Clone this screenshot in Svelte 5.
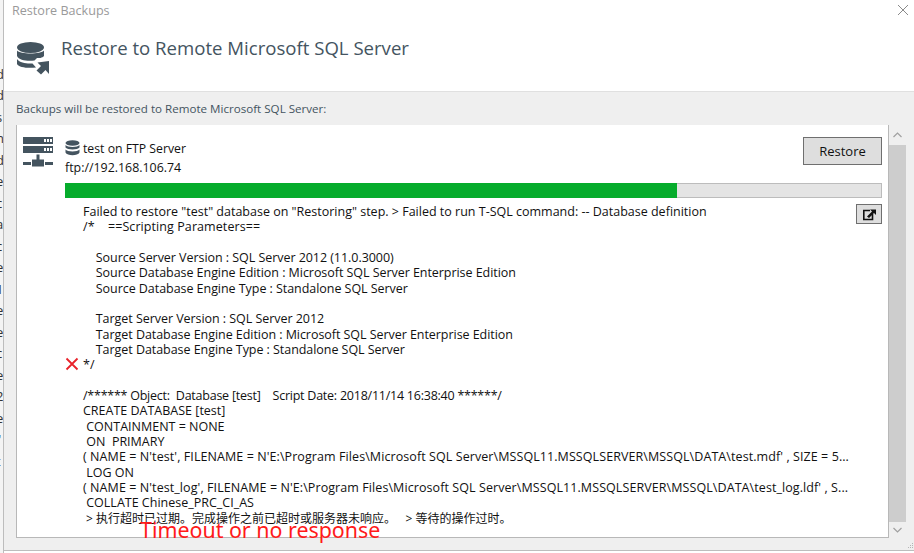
<script>
	const lines = [
		['Failed to restore "test" database on "Restoring" step. > Failed to run T-SQL command: -- Database definition', ''],
		['/*    ==Scripting Parameters==', 'wide'],
		['', ''],
		['    Source Server Version : SQL Server 2012 (11.0.3000)', 'tight'],
		['    Source Database Engine Edition : Microsoft SQL Server Enterprise Edition', 'tight'],
		['    Source Database Engine Type : Standalone SQL Server', 'tight'],
		['', ''],
		['    Target Server Version : SQL Server 2012', 'tight'],
		['    Target Database Engine Edition : Microsoft SQL Server Enterprise Edition', 'tight'],
		['    Target Database Engine Type : Standalone SQL Server', 'tight'],
		['*/', ''],
		['', ''],
		['/****** Object:  Database [test]    Script Date: 2018/11/14 16:38:40 ******/', 'stars'],
		['CREATE DATABASE [test]', ''],
		[' CONTAINMENT = NONE', ''],
		[' ON  PRIMARY', ''],
		["( NAME = N'test', FILENAME = N'E:\\Program Files\\Microsoft SQL Server\\MSSQL11.MSSQLSERVER\\MSSQL\\DATA\\test.mdf' , SIZE = 5...", 'wide'],
		[' LOG ON', ''],
		["( NAME = N'test_log', FILENAME = N'E:\\Program Files\\Microsoft SQL Server\\MSSQL11.MSSQLSERVER\\MSSQL\\DATA\\test_log.ldf' , S...", 'wide'],
		[' COLLATE Chinese_PRC_CI_AS', ''],
		[' > 执行超时已过期。完成操作之前已超时或服务器未响应。   > 等待的操作过时。', 'cjk']
	];
	// fragments of the window behind, seen in the strip at the left
	const behind = ['J', 'd', 'd', 's', 'n', 'd', 'e', 'c', 'a', 'c', 'e', '1', 'e', 'e', 'c', 'e', '2', 'e', '"', 't'];
</script>

<div class="page">
	<div class="behind">
		{#each behind as ch}
			<span>{ch}</span>
		{/each}
	</div>

	<div class="dialog">
		<div class="titlebar">
			<span class="title">Restore Backups</span>
			<svg class="close" width="12" height="12" viewBox="0 0 12 12">
				<path d="M1 1 L11 11 M11 1 L1 11" stroke="#8a8a8a" stroke-width="1" fill="none" />
			</svg>
		</div>

		<div class="header">
			<svg class="header-icon" width="34" height="34" viewBox="0 0 34 34">
				<ellipse cx="14.5" cy="6.5" rx="13.5" ry="5.5" fill="#44545f" />
				<path d="M1 9.500 C4 13.500 25 13.500 28 9.500 V15 C27 16 26 16.500 24.500 17 H21 L18.500 19.500 C12 20.500 3 19.500 1 15 Z" fill="#44545f" />
				<path d="M1 18 C4 22 11 23 16.500 22.500 L20 26.500 C12 27.500 3 26.500 1 23 Z" fill="#44545f" />
				<path d="M20.500 29.500 L25 25 L21.500 21.500 L33 20 V33 L29.500 29 L25 33.500 Z" fill="#44545f" />
			</svg>
			<h1>Restore to Remote Microsoft SQL Server</h1>
		</div>

		<div class="body">
			<p class="intro">Backups will be restored to Remote Microsoft SQL Server:</p>
			<div class="panel">
				<div class="content">
					<svg class="server" width="30" height="30" viewBox="0 0 30 30">
						<path d="M0 0 H30 V7 H0 Z M0 9 H30 V16 H0 Z" fill="#44545f" />
						<path d="M21 2 h2 v3 h-2 Z M24 2 h2 v3 h-2 Z M27 2 h2 v3 h-2 Z M21 11 h2 v3 h-2 Z M24 11 h2 v3 h-2 Z M27 11 h2 v3 h-2 Z" fill="#fff" />
						<path d="M13.500 17.500 h3 v5 h4.500 v7 h-12 v-7 h4.500 Z M0 25 h8 v3 h-8 Z M22 25 h8 v3 h-8 Z" fill="#44545f" />
					</svg>
					<div class="job">
						<div class="job-head">
							<div class="job-name">
								<div class="name-line">
									<svg width="15" height="16" viewBox="0 0 15 16">
										<ellipse cx="7.500" cy="3" rx="7" ry="2.800" fill="#44545f" />
										<path d="M.5 5 C2 7.500 13 7.500 14.500 5 V7.500 C13 10 2 10 .5 7.500 Z M.5 9.500 C2 12 13 12 14.500 9.500 V12.500 C13 16 2 16 .5 12.500 Z" fill="#44545f" />
									</svg>
									<span>test on FTP Server</span>
								</div>
								<div class="url">ftp://192.168.106.74</div>
							</div>
							<button class="restore">Restore</button>
						</div>
						<div class="progress"><div class="bar" style="width: 75%"></div></div>
						<div class="result">
							<svg class="fail" width="14" height="14" viewBox="0 0 14 14">
								<path d="M1.500 1.500 L12.500 12.500 M12.500 1.500 L1.500 12.500" stroke="#e8222a" stroke-width="1.800" fill="none" />
							</svg>
							<div class="log">
								{#each lines as [text, kind]}
									<div class="log-line {kind}">{text}</div>
								{/each}
							</div>
							<button class="open" aria-label="Open log">
								<svg width="15" height="14" viewBox="0 0 15 14">
									<path d="M1 3.500 H8 M1.800 3 V12.500 H10.500 V7" stroke="#111" stroke-width="1.600" fill="none" />
									<path d="M5 9.500 L10 4.500 L8 2.500 H14 V8 L12 6 L7 11 Z" fill="#111" />
								</svg>
							</button>
						</div>
					</div>
				</div>
				<div class="note">Timeout or no response</div>
				<div class="scrollbar">
					<div class="arrow up">
						<svg width="9" height="6" viewBox="0 0 9 6"><path d="M.5 5 L4.500 1 L8.500 5" stroke="#a0a0a0" fill="none" stroke-width="1.200" /></svg>
					</div>
					<div class="thumb"></div>
					<div class="arrow down">
						<svg width="9" height="6" viewBox="0 0 9 6"><path d="M.5 1 L4.500 5 L8.500 1" stroke="#a0a0a0" fill="none" stroke-width="1.200" /></svg>
					</div>
				</div>
			</div>
			<svg class="grip" width="7" height="7" viewBox="0 0 7 7">
				<path d="M5 0 h1 v1 h-1 Z M3 2 h1 v1 h-1 Z M5 2 h1 v1 h-1 Z M1 4 h1 v1 h-1 Z M3 4 h1 v1 h-1 Z M5 4 h1 v1 h-1 Z" fill="#b5b5b5" />
			</svg>
		</div>
		<div class="under"></div>
	</div>
</div>

<style>
	:global(body) {
		margin: 0;
		background: #fff;
	}

	.page {
		display: flex;
		width: 914px;
		height: 553px;
		overflow: hidden;
		font-family: "Open Sans", "Noto Sans CJK SC", sans-serif;
		font-size: 12.5px;
		color: #111;
		background: #f4f4f4;
	}

	.behind {
		width: 3px;
		flex: none;
		overflow: hidden;
		padding-top: 42px;
		display: flex;
		flex-direction: column;
		color: #333;
		font-size: 13px;
		line-height: 21.5px;
	}

	.behind span {
		display: block;
		margin-left: -4px;
	}

	.dialog {
		flex: 1;
		display: flex;
		flex-direction: column;
		background: #fff;
		border-left: 1px solid #bdbdbd;
		min-width: 0;
	}

	.titlebar {
		height: 20px;
		display: flex;
		justify-content: space-between;
		align-items: center;
		padding: 0 5px 0 8px;
		flex: none;
	}

	.title {
		color: #9a9a9a;
		font-size: 12.6px;
	}

	.header {
		height: 72px;
		flex: none;
		display: flex;
		align-items: flex-start;
		padding-left: 12px;
		box-sizing: border-box;
		border-bottom: 1px solid #e0e0e0;
	}

	.header-icon {
		margin-top: 21px;
	}

	h1 {
		margin: 15px 0 0 11px;
		font-size: 18.6px;
		font-weight: 400;
		color: #44545f;
	}

	.body {
		position: relative;
		flex: 1;
		background: #efefef;
		padding: 0 8px 12px 12px;
		display: flex;
		flex-direction: column;
		min-height: 0;
	}

	.intro {
		margin: 0;
		height: 33px;
		line-height: 33px;
		font-size: 11.6px;
		color: #44545f;
		flex: none;
	}

	.panel {
		position: relative;
		flex: 1;
		display: flex;
		border-left: 1px solid #b8b8b8;
		min-height: 0;
	}

	.content {
		flex: 1;
		display: flex;
		min-width: 0;
		background: #fff;
		border-bottom: 1px solid #b8b8b8;
		padding: 12px 6px 0 6px;
		gap: 12px;
	}

	.server {
		flex: none;
	}

	.job {
		flex: 1;
		min-width: 0;
	}

	.job-head {
		display: flex;
		justify-content: space-between;
		height: 46px;
	}

	.name-line {
		display: flex;
		align-items: center;
		gap: 3px;
		height: 18px;
		margin-top: 2px;
		font-size: 12.25px;
	}

	.url {
		margin-top: 2px;
		line-height: 18px;
		font-size: 12.4px;
	}

	button {
		font-family: inherit;
		font-size: 13px;
		color: #111;
		background: #dedede;
		border: 1px solid #6f6f6f;
		padding: 0;
	}

	.restore {
		width: 79px;
		height: 28px;
	}

	.progress {
		height: 15px;
		box-sizing: border-box;
		background: #e4e4e4;
		border: 1px solid #bcbcbc;
		border-left: 0;
	}

	.bar {
		height: 15px;
		margin-top: -1px;
		background: #06ac2c;
	}

	.result {
		position: relative;
		padding: 6px 0 0 18px;
	}

	.fail {
		position: absolute;
		left: 0;
		top: 159px;
	}

	.open {
		position: absolute;
		right: 0;
		top: 6px;
		width: 26px;
		height: 20px;
		display: flex;
		align-items: center;
		justify-content: center;
	}

	.log-line {
		white-space: pre;
		line-height: 15.33px;
		height: 15.33px;
	}

	.tight {
		letter-spacing: -0.05px;
	}

	.wide {
		letter-spacing: 0.08px;
	}

	.stars {
		letter-spacing: -0.24px;
	}

	.cjk {
		font-size: 12px;
	}

	.note {
		position: absolute;
		left: 123px;
		top: 392px;
		font-size: 21.4px;
		font-family: "Noto Sans", sans-serif;
		color: #ff1a1a;
		line-height: 26px;
	}

	.scrollbar {
		width: 17px;
		flex: none;
		border-left: 1px solid #b8b8b8;
		display: flex;
		flex-direction: column;
	}

	.arrow {
		display: flex;
		align-items: center;
		justify-content: center;
		flex: none;
	}

	.up {
		height: 20px;
	}

	.down {
		height: 16px;
	}

	.thumb {
		flex: 1;
		background: #cdcdcd;
	}

	.grip {
		position: absolute;
		right: 0;
		bottom: 0;
	}

	.under {
		flex: none;
		height: 2px;
		border-top: 1px solid #bdbdbd;
		background: #fff;
	}
</style>
